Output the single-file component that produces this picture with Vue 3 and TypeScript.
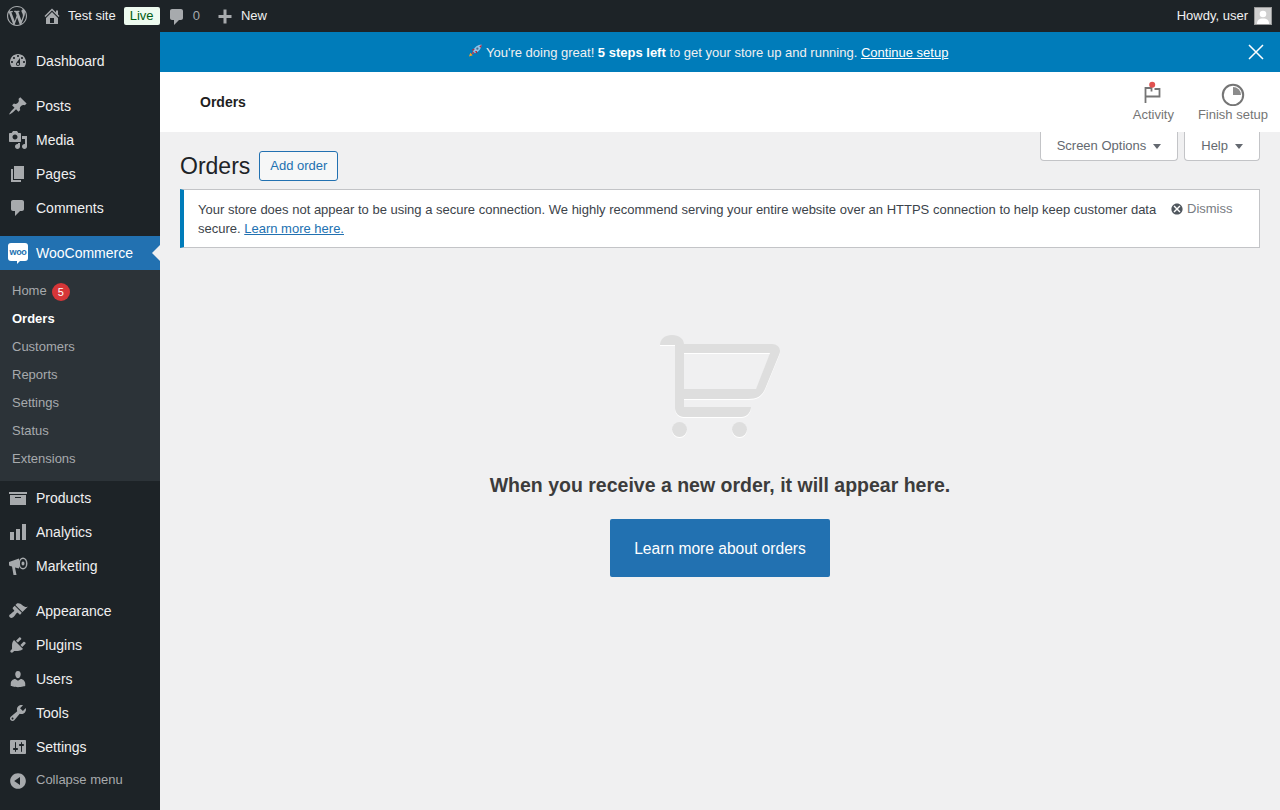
<script setup lang="ts">
interface Item { label: string; d: string; rule?: 'evenodd' | 'nonzero' }
const P = {
  dashboard: 'M3.76 16h12.48c1.1-1.37 1.76-3.11 1.76-5 0-4.42-3.58-8-8-8s-8 3.58-8 8c0 1.89.66 3.63 1.76 5zM10 4c.55 0 1 .45 1 1s-.45 1-1 1-1-.45-1-1 .45-1 1-1zM6 6c.55 0 1 .45 1 1s-.45 1-1 1-1-.45-1-1 .45-1 1-1zm8 0c.55 0 1 .45 1 1s-.45 1-1 1-1-.45-1-1 .45-1 1-1zm-5.37 5.55L12 7v6c0 1.1-.9 2-2 2s-2-.9-2-2c0-.57.24-1.08.63-1.45zM4 10c.55 0 1 .45 1 1s-.45 1-1 1-1-.45-1-1 .45-1 1-1zm12 0c.55 0 1 .45 1 1s-.45 1-1 1-1-.45-1-1 .45-1 1-1zm-5 3c0-.55-.45-1-1-1s-1 .45-1 1 .45 1 1 1 1-.45 1-1z',
  post: 'M10.44 3.02l1.82-1.82 6.36 6.35-1.83 1.82c-1.05-.68-2.48-.57-3.41.36l-.75.75c-.92.93-1.04 2.35-.35 3.41l-1.83 1.82-2.41-2.41-2.8 2.79c-.42.42-3.38 2.71-3.8 2.29s1.86-3.39 2.28-3.81l2.79-2.79L4.1 9.36l1.83-1.82c1.05.69 2.48.57 3.4-.36l.75-.75c.93-.92 1.05-2.35.36-3.41z',
  media: 'M13 11V4c0-.55-.45-1-1-1h-1.67L9 1H5L3.67 3H2c-.55 0-1 .45-1 1v7c0 .55.45 1 1 1h10c.55 0 1-.45 1-1zM7 4.5c1.38 0 2.5 1.12 2.5 2.5S8.38 9.5 7 9.5 4.5 8.38 4.5 7 5.62 4.5 7 4.5zM14 6h5v10.5c0 1.38-1.12 2.5-2.5 2.5S14 17.88 14 16.5s1.12-2.5 2.5-2.5c.17 0 .34.02.5.05V9h-3V6zm-4 8.05V13h2v3.5c0 1.38-1.12 2.5-2.5 2.5S7 17.88 7 16.5 8.12 14 9.5 14c.17 0 .34.02.5.05z',
  page: 'M6 15V2h10v13H6zm-1 1h8v2H3V5h2v11z',
  comment: 'M5 2h9c1.1 0 2 .9 2 2v7c0 1.1-.9 2-2 2h-2l-5 5v-5H5c-1.1 0-2-.9-2-2V4c0-1.1.9-2 2-2z',
  archive: 'M19 4v2H1V4h18zM2 7h16v10H2V7zm11 3V9H7v1h6z',
  bars: 'M18 18V2h-4v16h4zm-6 0V7H8v11h4zm-6 0v-8H2v8h4z',
  megaphone: 'M1 6L11 2.500V12.500L7 11.500 8.500 19H5.500L4 10.500 2 10C1 9.800 1 9 1 8zM15 1.500a4.500 6 0 1 1 0 12a4.500 6 0 1 1 0-12zM15 3a3 4.500 0 1 0 0 9a3 4.500 0 1 0 0-9zM15 5.500a1.500 2 0 1 1 0 4a1.500 2 0 1 1 0-4z',
  brush: 'M14.48 11.06L7.41 3.99l1.5-1.5c.5-.56 2.3-.47 3.51.32 1.21.8 1.43 1.28 2.91 2.1 1.18.64 2.45 1.26 4.45.85zm-.71.71L6.7 4.7 4.93 6.47c-.39.39-.39 1.02 0 1.41l1.06 1.06c.39.39.39 1.03 0 1.42-.6.6-1.43 1.11-2.21 1.69-.35.26-.7.53-1.01.84C1.43 13.23.4 14.89 1.8 16.3c1.4 1.4 3.06.38 4.4-.98.31-.31.58-.66.85-1.02.57-.78 1.08-1.61 1.69-2.21.39-.39 1.02-.39 1.41 0l1.06 1.06c.39.39 1.02.39 1.41 0z',
  plugin: 'M13.11 4.36L9.87 7.6 8 5.73l3.24-3.24c.35-.34 1.05-.2 1.56.32.52.51.66 1.21.31 1.55zm-8 1.77l.91-1.12 9.01 9.01-1.19.84c-.71.71-2.63 1.16-3.82 1.16H6.14L4.9 17.26c-.59.59-1.54.59-2.12 0-.59-.58-.59-1.53 0-2.12l1.24-1.24v-3.88c0-1.13.4-3.19 1.09-3.89zm7.26 3.97l3.24-3.24c.34-.35 1.04-.21 1.55.31.52.51.66 1.21.31 1.55l-3.24 3.25z',
  users: 'M10 9.25c-2.27 0-2.73-3.44-2.73-3.44C7 4.02 7.82 2 9.97 2c2.16 0 2.98 2.02 2.71 3.81 0 0-.41 3.44-2.68 3.44zm0 2.57L12.72 10c2.39 0 4.52 2.33 4.52 4.53v2.49s-3.65 1.13-7.24 1.13c-3.65 0-7.24-1.13-7.24-1.13v-2.49c0-2.25 1.94-4.48 4.47-4.48z',
  tools: 'M16.68 9.77c-1.34 1.34-3.3 1.67-4.95.99l-5.41 6.52c-.99.99-2.59.99-3.58 0s-.99-2.59 0-3.57l6.52-5.42c-.68-1.65-.35-3.61.99-4.95 1.28-1.28 3.12-1.62 4.72-1.06l-2.89 2.89 2.82 2.82 2.86-2.87c.53 1.58.18 3.39-1.08 4.65zM3.81 16.21c.4.39 1.04.39 1.43 0 .4-.4.4-1.04 0-1.43-.39-.4-1.03-.4-1.43 0-.39.39-.39 1.03 0 1.43z',
  settings: 'M18 16V4c0-.55-.45-1-1-1H3c-.55 0-1 .45-1 1v12c0 .55.45 1 1 1h14c.55 0 1-.45 1-1zM8 11h1c.55 0 1 .45 1 1s-.45 1-1 1H8v1.5c0 .28-.22.5-.5.5s-.5-.22-.5-.5V13H6c-.55 0-1-.45-1-1s.45-1 1-1h1V5.5c0-.28.22-.5.5-.5s.5.22.5.5V11zm5-2h-1c-.55 0-1-.45-1-1s.45-1 1-1h1V5.5c0-.28.22-.5.5-.5s.5.22.5.5V7h1c.55 0 1 .45 1 1s-.45 1-1 1h-1v5.5c0 .28-.22.5-.5.5s-.5-.22-.5-.5V9z',
  collapse: 'M10 2.16c4.33 0 7.84 3.51 7.84 7.84s-3.51 7.84-7.84 7.84S2.16 14.33 2.16 10 5.71 2.16 10 2.16zm2 11.72V6.12L6.18 9.97z',
  wp: 'M20 10c0-5.51-4.49-10-10-10C4.48 0 0 4.49 0 10c0 5.52 4.48 10 10 10 5.51 0 10-4.48 10-10zM7.78 15.37L4.37 6.22c.55-.02 1.17-.08 1.17-.08.5-.06.44-1.13-.06-1.11 0 0-1.45.11-2.37.11-.18 0-.37 0-.58-.01C4.12 2.69 6.87 1.11 10 1.11c2.33 0 4.45.87 6.05 2.34-.68-.11-1.65.39-1.65 1.58 0 .74.45 1.36.9 2.1.35.61.55 1.36.55 2.46 0 1.49-1.4 5-1.4 5l-3.03-8.37c.54-.02.82-.17.82-.17.5-.05.44-1.25-.06-1.22 0 0-1.44.12-2.38.12-.87 0-2.33-.12-2.33-.12-.5-.03-.56 1.2-.06 1.22l.92.08 1.26 3.41zM17.41 10c.24-.64.74-1.87.43-4.25.7 1.29 1.05 2.71 1.05 4.25 0 3.29-1.73 6.24-4.4 7.78.97-2.59 1.94-5.2 2.92-7.78zM6.1 18.09C3.12 16.65 1.11 13.53 1.11 10c0-1.3.23-2.48.72-3.59C3.25 10.3 4.67 14.2 6.1 18.09zm4.03-6.63l2.58 6.98c-.86.29-1.76.45-2.71.45-.79 0-1.57-.11-2.29-.33.81-2.38 1.62-4.74 2.42-7.1z',
  home: 'M16 8.5l1.53 1.53-1.06 1.06L10 4.62l-6.47 6.47-1.06-1.06L10 2.5l4 4v-2h2v4zm-6-2.46l6 5.99V18H4v-5.97zM12 17v-5H8v5h4z',
  plus: 'M16.500 9v3H11.500v5.500h-3V12H3.500V9h5V3.500h3V9z',
  dismiss: 'M10 2c4.42 0 8 3.58 8 8s-3.58 8-8 8-8-3.58-8-8 3.58-8 8-8zm3.54 3.05L10 8.590 6.460 5.050 5.050 6.460 8.590 10l-3.540 3.540 1.410 1.410L10 11.410l3.540 3.540 1.410-1.410L11.410 10l3.540-3.540z'
}
const top: Item[] = [
  { label: 'Posts', d: P.post }, { label: 'Media', d: P.media },
  { label: 'Pages', d: P.page }, { label: 'Comments', d: P.comment }
]
const sub = ['Orders', 'Customers', 'Reports', 'Settings', 'Status', 'Extensions']
const mid: Item[] = [
  { label: 'Products', d: P.archive }, { label: 'Analytics', d: P.bars },
  { label: 'Marketing', d: P.megaphone, rule: 'nonzero' }
]
const low: Item[] = [
  { label: 'Appearance', d: P.brush }, { label: 'Plugins', d: P.plugin }, { label: 'Users', d: P.users },
  { label: 'Tools', d: P.tools }, { label: 'Settings', d: P.settings }
]
</script>

<template>
  <div class="page">
    <header class="adminbar">
      <div class="bar-left">
        <svg class="wp" viewBox="0 0 20 20"><path :d="P.wp" fill-rule="evenodd" /></svg>
        <svg class="home" viewBox="0 0 20 20"><path :d="P.home" fill-rule="evenodd" /></svg>
        <span class="site">Test site</span>
        <span class="live">Live</span>
        <svg class="bubble" viewBox="0 0 20 20"><path :d="P.comment" /></svg>
        <span class="zero">0</span>
        <svg class="plus" viewBox="0 0 20 20"><path :d="P.plus" /></svg>
        <span class="new">New</span>
      </div>
      <div class="bar-right">
        <span class="howdy">Howdy, user</span>
        <svg class="avatar" viewBox="0 0 18 18">
          <rect width="18" height="18" fill="#9a9a9a" />
          <rect x="1" y="1" width="16" height="16" fill="#cfcfcf" />
          <circle cx="9" cy="7" r="3.300" fill="#fff" />
          <path d="M3 17c0-4 2-5.500 6-5.500s6 1.500 6 5.500z" fill="#fff" />
        </svg>
      </div>
    </header>

    <div class="shell">
      <nav class="sidebar">
        <a class="item first">
          <svg viewBox="0 0 20 20"><path :d="P.dashboard" fill-rule="evenodd" /></svg><span>Dashboard</span>
        </a>
        <div class="group">
          <a v-for="it in top" :key="it.label" class="item">
            <svg viewBox="0 0 20 20"><path :d="it.d" fill-rule="evenodd" /></svg><span>{{ it.label }}</span>
          </a>
        </div>
        <a class="item current">
          <span class="woo"><span class="woo-text">woo</span></span><span>WooCommerce</span>
          <i class="arrow"></i>
        </a>
        <ul class="submenu">
          <li class="sub-home">Home <b class="count">5</b></li>
          <li v-for="s in sub" :key="s" :class="{ strong: s === 'Orders' }">{{ s }}</li>
        </ul>
        <a v-for="it in mid" :key="it.label" class="item">
          <svg viewBox="0 0 20 20"><path :d="it.d" :fill-rule="it.rule ?? 'evenodd'" /></svg><span>{{ it.label }}</span>
        </a>
        <div class="group">
          <a v-for="it in low" :key="it.label" class="item">
            <svg viewBox="0 0 20 20"><path :d="it.d" fill-rule="evenodd" /></svg><span>{{ it.label }}</span>
          </a>
        </div>
        <a class="collapse">
          <svg viewBox="0 0 20 20"><path :d="P.collapse" fill-rule="evenodd" /></svg><span>Collapse menu</span>
        </a>
      </nav>

      <main class="main">
        <div class="banner">
          <p class="banner-text">
            <svg class="rocket" viewBox="0 0 16 16">
              <path d="M2.500 10.500l-1.500 4 4-1.500z" fill="#f7a823" />
              <path d="M4 12l3-1-2-2z" fill="#d3354a" />
              <path d="M5 8.500C7 4 10.500 1.800 14.500 1.500 14.200 5.500 12 9 7.500 11z" fill="#8fc4e8" />
              <path d="M12 4l2.500-2.500c0 1.500-.3 2.600-.6 3.600z" fill="#c0273c" />
              <path d="M4.500 6.500l3-.5-2.500 3zM9.500 8.500l.5 3-3-2.500z" fill="#b02a3a" />
              <circle cx="10" cy="6" r="1.200" fill="#3b6e95" />
            </svg>
            You're doing great! <b>5 steps left</b> to get your store up and running. <a>Continue setup</a>
          </p>
          <svg class="close" viewBox="0 0 16 16"><path d="M1 1l14 14M15 1L1 15" stroke="#fff" stroke-width="1.500" fill="none" /></svg>
        </div>

        <div class="wc-header">
          <h2>Orders</h2>
          <div class="wc-actions">
            <div class="wc-action">
              <svg viewBox="0 0 24 26" class="head-icon">
                <path d="M4.500 23V8h6v3.500M4.500 16.500h14V9h-5" fill="none" stroke="#757575" stroke-width="1.800" />
                <circle cx="11.200" cy="4.700" r="3" fill="#e0504f" />
              </svg>
              <span>Activity</span>
            </div>
            <div class="wc-action">
              <svg viewBox="0 0 24 26" class="head-icon">
                <circle cx="12" cy="15" r="10.200" fill="none" stroke="#757575" stroke-width="2" />
                <path d="M12 7v8h8a8 8 0 0 0-8-8z" fill="#8c8c8c" />
              </svg>
              <span>Finish setup</span>
            </div>
          </div>
        </div>

        <div class="content">
          <div class="title-row">
            <div class="title-left">
              <h1>Orders</h1>
              <a class="add">Add order</a>
            </div>
            <div class="tabs">
              <button class="tab">Screen Options<i class="caret"></i></button>
              <button class="tab">Help<i class="caret"></i></button>
            </div>
          </div>

          <div class="notice">
            <p>Your store does not appear to be using a secure connection. We highly recommend serving your entire website over an HTTPS connection to help keep customer data secure. <a>Learn more here.</a></p>
            <span class="dismiss">
              <svg viewBox="0 0 20 20"><path :d="P.dismiss" fill-rule="evenodd" /></svg>Dismiss
            </span>
          </div>

          <section class="empty">
            <svg class="cart" viewBox="0 0 124 106">
              <g transform="translate(-658 -333)">
                <path fill="#dedede" fill-rule="evenodd" d="M660 345C660 339 665 335 672 335C679 335 684 339 684 344L772 344C778 344 782 349 779 355L765 389C762 396 757 399 748 399L684 399L684 407L751 407C751 412 747 417 741 417L684 417C679 417 675 413 675 408L675 345ZM684 353L770 353L756 389L684 389Z" />
                <circle cx="679.500" cy="429.500" r="7.500" fill="#dedede" />
                <circle cx="739.500" cy="429.500" r="7.500" fill="#dedede" />
              </g>
            </svg>
            <h3>When you receive a new order, it will appear here.</h3>
            <a class="learn">Learn more about orders</a>
          </section>
        </div>
      </main>
    </div>
  </div>
</template>

<style>
html, body { margin: 0; background: #f0f0f1; }
</style>

<style scoped>
.page { width: 1280px; height: 810px; overflow: hidden; font-family: "Liberation Sans", Arial, sans-serif; color: #3c434a; font-size: 13px; background: #f0f0f1; }
.adminbar { height: 32px; background: #1d2327; display: flex; justify-content: space-between; align-items: center; color: #f0f0f1; }
.bar-left, .bar-right { display: flex; align-items: center; }
.wp { width: 20px; height: 20px; fill: #a7aaad; margin-left: 7px; }
.home { width: 20px; height: 20px; fill: #a7aaad; margin-left: 15px; margin-right: 6px; }
.site { margin-right: 8px; }
.site, .zero, .new, .howdy { margin-top: -2px; }
.live { background: #edfaef; color: #005c12; width: 36px; height: 18px; line-height: 17px; text-align: center; border-radius: 2px; margin-right: 7px; }
.bubble { width: 20px; height: 20px; fill: #a7aaad; margin-top: 2px; }
.zero { color: #a7aaad; margin-left: 6px; }
.plus { width: 20px; height: 20px; fill: #a7aaad; margin-left: 15px; margin-right: 6px; }
.bar-right { margin-right: 8px; gap: 6px; }
.avatar { width: 18px; height: 18px; }

.shell { display: flex; height: 778px; }
.sidebar { width: 160px; flex: none; background: #1d2327; }
.item { display: flex; align-items: center; height: 34px; color: #f0f0f1; font-size: 14px; position: relative; }
.item svg { width: 20px; height: 20px; fill: #a7aaad; margin-left: 8px; margin-right: 8px; flex: none; }
.first { margin-top: 12px; }
.group { margin-top: 11px; margin-bottom: 0; }
.current { margin-top: 11px; background: #2271b1; color: #fff; }
.woo { width: 20px; height: 18px; margin-top: -2px; background: #fff; border-radius: 3px; margin-left: 8px; margin-right: 8px; display: flex; align-items: center; justify-content: center; flex: none; position: relative; }
.woo::after { content: ""; position: absolute; bottom: -3px; left: 9px; border: 2px solid transparent; border-top-color: #fff; border-left-color: #fff; }
.woo-text { font-size: 9px; line-height: 10px; font-weight: 700; color: #2271b1; letter-spacing: -.3px; }
.arrow { position: absolute; right: 0; top: 9px; border: 8px solid transparent; border-left-width: 0; border-right-color: #f0f0f1; }
.submenu { list-style: none; margin: 0; padding: 7px 0 9px; background: #2c3338; height: 195px; }
.submenu li { height: 28px; line-height: 28px; padding-left: 12px; color: #a7aaad; font-size: 13px; }
.submenu .strong { color: #fff; font-weight: 700; }
.sub-home { display: flex; align-items: center; gap: 5px; }
.count { width: 18px; height: 18px; border-radius: 50%; background: #d63638; color: #fff; font-weight: 400; font-size: 11px; line-height: 18px; text-align: center; margin-top: 1px; }
.collapse { display: flex; align-items: center; height: 32px; color: #a7aaad; font-size: 13px; }
.collapse svg { width: 20px; height: 20px; fill: #a7aaad; margin: 1px 8px 0; flex: none; }
.collapse span { margin-top: -2px; }

.main { flex: 1; min-width: 0; display: flex; flex-direction: column; }
.banner { height: 40px; background: #007cba; display: flex; align-items: center; color: #f0f0f1; position: relative; }
.banner-text { margin: -2px 0 0; width: 1096px; text-align: center; }
.banner-text b { color: #fff; }
.banner-text a { color: #fff; text-decoration: underline; }
.rocket { width: 15px; height: 15px; vertical-align: -1px; }
.close { position: absolute; right: 16px; top: 12px; width: 16px; height: 16px; }
.wc-header { height: 60px; background: #fff; display: flex; justify-content: space-between; align-items: stretch; }
.wc-header h2 { margin: 0 0 0 40px; font-size: 14px; font-weight: 700; color: #1e1e1e; line-height: 60px; }
.wc-actions { display: flex; padding-right: 12px; gap: 24px; }
.wc-action { display: flex; flex-direction: column; align-items: center; color: #757575; padding-top: 8px; }
.wc-action span { margin-top: 1px; }
.head-icon { width: 24px; height: 26px; }
.content { padding: 0 20px; flex: 1; }
.title-row { display: flex; justify-content: space-between; align-items: flex-start; height: 57px; }
.title-left { display: flex; align-items: center; gap: 9px; margin-top: 19px; }
h1 { margin: 0; font-size: 23px; font-weight: 400; color: #1d2327; line-height: 30px; }
.add { box-sizing: border-box; height: 30px; line-height: 28px; padding: 0 10px; border: 1px solid #2271b1; color: #2271b1; background: #f6f7f7; border-radius: 3px; }
.tabs { display: flex; gap: 6px; }
.tab { box-sizing: border-box; height: 29px; background: #fff; border: 1px solid #c3c4c7; border-top: 0; border-radius: 0 0 4px 4px; padding: 0 16px 2px; color: #646970; font: 13px "Liberation Sans", Arial, sans-serif; display: flex; align-items: center; gap: 6px; }
.caret { border: 4.500px solid transparent; border-top: 5px solid #646970; border-bottom: 0; margin-left: 1px; margin-top: 2px; }
.notice { box-sizing: border-box; height: 59px; background: #fff; border: 1px solid #c3c4c7; border-left: 4px solid #007cba; padding: 10px 14px; position: relative; }
.notice p { margin: 0; line-height: 19px; width: 975px; }
.notice a { color: #2271b1; text-decoration: underline; }
.dismiss { position: absolute; left: 986px; top: 10px; display: flex; align-items: center; gap: 3px; color: #787c82; line-height: 17px; }
.dismiss svg { width: 14px; height: 14px; fill: #50575e; }
.empty { display: flex; flex-direction: column; align-items: center; }
.cart { width: 124px; height: 106px; margin-top: 85px; filter: drop-shadow(0 1px 0 #fff); }
.empty h3 { margin: 33px 0 0; font-size: 19.5px; line-height: 26px; font-weight: 700; color: #3c3c3c; }
.learn { margin-top: 21px; width: 220px; height: 58px; line-height: 60px; text-align: center; background: #2271b1; color: #fff; font-size: 15.6px; border-radius: 2px; }
</style>
